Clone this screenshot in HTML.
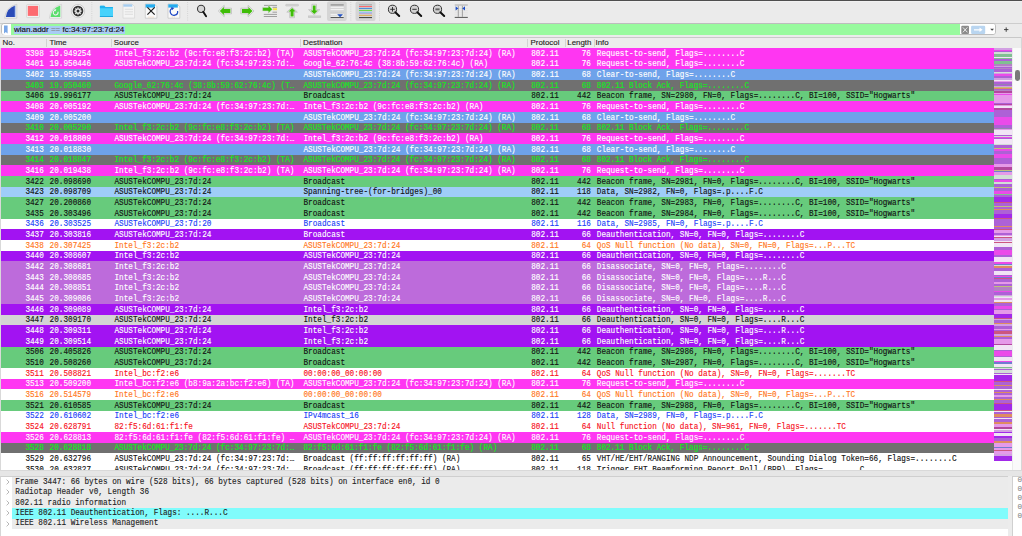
<!DOCTYPE html>
<html><head><meta charset="utf-8">
<style>
html,body{margin:0;padding:0;}
body{width:1022px;height:536px;overflow:hidden;position:relative;background:#ebebeb;font-family:"Liberation Sans",sans-serif;}
.abs{position:absolute;}
#tb{position:absolute;left:0;top:0;}
#filter{position:absolute;left:1px;top:23px;width:995px;height:12px;box-sizing:border-box;border:1px solid #bdbdbd;border-radius:3px;background:#fff;}
#fgreen{position:absolute;left:11px;top:24px;width:948.5px;height:11px;background:#98fa9e;}
#fsel{position:absolute;left:13.7px;top:25.5px;width:111.3px;height:8.3px;background:#a8ccf4;}
#ftext{position:absolute;left:14px;top:24px;height:11px;line-height:11px;font-size:8px;color:#111;white-space:pre;-webkit-text-stroke:0.15px #111;}
#hdr{position:absolute;left:0;top:36.5px;width:1022px;height:11.5px;background:#ececec;border-top:1px solid #c8c8c8;box-sizing:border-box;}
.hl{position:absolute;top:37px;height:11px;line-height:11px;font-size:7.9px;color:#222;white-space:pre;-webkit-text-stroke:0.12px #222;}
.hs{position:absolute;top:38.5px;width:1px;height:8.5px;background:#d2d2d2;}
#list{position:absolute;left:0;top:48px;width:1022px;height:422px;background:#fff;overflow:hidden;}
.r{position:absolute;left:1px;width:993px;height:10.667px;font-family:"Liberation Mono",monospace;font-size:7.7px;line-height:10.667px;white-space:pre;}
.r span{position:absolute;top:0.5px;margin-left:0.4px;transform:scaleY(1.1);transform-origin:0 7px;-webkit-text-stroke:0.12px currentColor;}
.no{left:24px;}
.tm{left:48.2px;}
.src{left:113.1px;}
.dst{left:302.1px;}
.pr{left:529.8px;}
.ln{left:560px;width:29.5px;text-align:right;}
.inf{left:595.4px;}
#det{position:absolute;left:0;top:475.5px;width:1008px;height:60.5px;background:#fff;border-top:1px solid #cfcfcf;border-left:1px solid #d6d6d6;box-sizing:border-box;}
.dr{position:absolute;left:11.2px;width:996px;height:10.4px;background:#ebebeb;font-family:"Liberation Mono",monospace;font-size:7.7px;line-height:10.4px;white-space:pre;color:#1e1e1e;}
.dr span{position:absolute;left:3.1px;top:-0.3px;transform:scaleY(1.1);transform-origin:0 7px;-webkit-text-stroke:0.12px currentColor;}
.chev{position:absolute;left:5px;}
</style></head><body>
<!-- toolbar -->
<div class="abs" style="left:0;top:0;width:1022px;height:1px;background:#4e4e4e"></div>
<div class="abs" style="left:0;top:1px;width:1022px;height:1px;background:#f1f1f1"></div>
<div class="abs" style="left:0;top:22.5px;width:1022px;height:1px;background:#cdcdcd"></div>
<svg id="tb" width="1022" height="23" viewBox="0 0 1022 23">
<!-- start fin -->
<path d="M4.6 18.2 Q5.8 7 16.8 4.2 V18.2 Z" fill="#f3f3f3" stroke="#c6c6c6" stroke-width="0.7"/>
<path d="M5.9 16.9 Q7 8.2 15.2 5.6 V16.9 Z" fill="#2a4bb8"/>
<path d="M15.2 5.8 V16.9" stroke="#a8c4f0" stroke-width="0.8"/>
<!-- stop -->
<rect x="26.6" y="4.6" width="12.8" height="13" rx="0.8" fill="#f2f2f2" stroke="#cdcdcd" stroke-width="0.7"/>
<rect x="27.8" y="5.9" width="10.3" height="10" fill="#fd6a70"/>
<!-- restart fin -->
<path d="M49.3 18.2 Q50.5 7 61.6 4.2 V18.2 Z" fill="#f4f4f4" stroke="#cfcfcf" stroke-width="0.7"/>
<path d="M50.5 17 Q51.6 8.2 60.3 5.5 V17 Z" fill="#5ade6c"/>
<path d="M57.9 11.7 A2.4 2.4 0 1 1 55 10.3" fill="none" stroke="#f4eef4" stroke-width="1.1"/>
<path d="M54.2 9.2 L56.4 9.3 L55.4 11.4 Z" fill="#f4eef4"/>
<!-- options gear -->
<circle cx="78" cy="11.1" r="6.7" fill="#f4f4f4" stroke="#a8a8a8" stroke-width="0.45"/>
<circle cx="78" cy="11.1" r="5.3" fill="#363636"/>
<g fill="#f2f2f2">
<circle cx="78" cy="11.1" r="2.7"/>
<rect x="77.4" y="7.4" width="1.2" height="7.4"/>
<rect x="74.3" y="10.5" width="7.4" height="1.2"/>
<rect x="77.4" y="7.4" width="1.2" height="7.4" transform="rotate(45 78 11.1)"/>
<rect x="77.4" y="7.4" width="1.2" height="7.4" transform="rotate(-45 78 11.1)"/>
</g>
<circle cx="78" cy="11.1" r="1.5" fill="#2a2a2a"/>
<!-- sep -->
<path d="M91.8 2 V20.5" stroke="#c4c4c4" stroke-width="0.6" stroke-dasharray="1 1.2"/>
<!-- folder -->
<path d="M99.9 16.4 V6.3 Q99.9 5.7 100.5 5.7 H104.3 L105.4 6.9 H112.4 Q113 6.9 113 7.5 V16.4 Q113 16.9 112.4 16.9 H100.5 Q99.9 16.9 99.9 16.4 Z" fill="#48d2fc"/>
<path d="M99.9 8.2 V6.3 Q99.9 5.7 100.5 5.7 H104.3 L105.4 6.9 H112.4 Q113 6.9 113 7.5 V8.2 Z" fill="#1eb3ee"/>
<rect x="99.9" y="16" width="13.1" height="0.9" fill="#1aa3dd"/>
<!-- doc faded -->
<path d="M123 4 H132 L134.6 6.6 V18.1 H123 Z" fill="#f4f4f4" stroke="#d0d0d0" stroke-width="0.6"/>
<rect x="123.3" y="4.3" width="9" height="2.4" fill="#a6cdf0"/>
<path d="M124.8 9.3 H133 M124.8 11.8 H133 M124.8 14.3 H133" stroke="#d8d8d8" stroke-width="0.8"/>
<!-- doc close -->
<path d="M145.3 4 H154.3 L156.9 6.6 V18.2 H145.3 Z" fill="#fafafa" stroke="#b8b8b8" stroke-width="0.6"/>
<rect x="145.6" y="4.3" width="9.4" height="3.3" fill="#24abee"/>
<path d="M147.4 7.4 L154.7 14.7 M154.7 7.4 L147.4 14.7" stroke="#1e1e1e" stroke-width="1.2"/>
<path d="M148.6 17 H149.4 M150.6 17 H151.4 M152.6 17 H153.4" stroke="#f7c08a" stroke-width="0.8"/>
<!-- doc reload -->
<path d="M168 4 H177 L179.8 6.8 V18.2 H168 Z" fill="#fafafa" stroke="#b8b8b8" stroke-width="0.6"/>
<rect x="168.3" y="4.3" width="9.5" height="3.3" fill="#24abee"/>
<path d="M172.3 8.3 A3.7 3.7 0 1 0 177.6 11" fill="none" stroke="#1e47c4" stroke-width="1.2"/>
<path d="M171.2 6.9 L174.3 8 L172 10.2 Z" fill="#1e47c4"/>
<path d="M171.8 17 H172.6 M173.8 17 H174.6" stroke="#f7c08a" stroke-width="0.8"/>
<!-- sep -->
<path d="M187.6 2 V20.5" stroke="#c4c4c4" stroke-width="0.6" stroke-dasharray="1 1.2"/>
<!-- find -->
<circle cx="201.1" cy="8.9" r="3.6" fill="#d6d6d6" stroke="#3a3a3a" stroke-width="1.1"/>
<path d="M203.2 11.8 L206.1 16.3" stroke="#111" stroke-width="1.9" stroke-linecap="round"/>
<!-- back arrow -->
<path d="M218.3 11 L224.2 5.4 V8.2 H231.5 V13.8 H224.2 V16.6 Z" fill="#f2f2f2" stroke="#bcbcbc" stroke-width="0.8" stroke-linejoin="round"/>
<path d="M219.8 11 L223.9 6.9 V9.1 H230.4 V12.9 H223.9 V15.1 Z" fill="#3fbd08"/>
<!-- forward arrow -->
<path d="M254 11 L248.1 5.4 V8.2 H240.8 V13.8 H248.1 V16.6 Z" fill="#f2f2f2" stroke="#bcbcbc" stroke-width="0.8" stroke-linejoin="round"/>
<path d="M252.5 11 L248.4 6.9 V9.1 H241.9 V12.9 H248.4 V15.1 Z" fill="#3fbd08"/>
<!-- go to packet -->
<path d="M264 5.4 H277 M272.5 7.3 H277 M272.5 12.2 H277 M263.8 14.4 H277 M263.8 16.5 H277" stroke="#8c8c8c" stroke-width="0.8"/>
<rect x="273" y="8.2" width="4" height="2" fill="#f4e44a"/>
<path d="M272.4 9.2 L268.3 5.2 V7.4 H262.6 V11 H268.3 V13.2 Z" fill="#3fbd08" stroke="#d4d4d4" stroke-width="0.5"/>
<!-- first packet -->
<rect x="285.6" y="4.3" width="13" height="1.8" rx="0.9" fill="#d4d4d4" stroke="#bdbdbd" stroke-width="0.5"/>
<path d="M292.1 7 L297.4 12.1 H294.5 V17.7 H289.7 V12.1 H286.8 Z" fill="#f2f2f2" stroke="#bcbcbc" stroke-width="0.8" stroke-linejoin="round"/>
<path d="M292.1 8 L295.7 11.6 H293.6 V16.6 H290.6 V11.6 H288.5 Z" fill="#3fbd08"/>
<!-- last packet -->
<path d="M311.9 4.3 H316.5 V9.7 H319.8 L314.2 15 L308.6 9.7 H311.9 Z" fill="#f2f2f2" stroke="#bcbcbc" stroke-width="0.8" stroke-linejoin="round"/>
<path d="M312.8 5.5 H315.6 V10.4 H317.9 L314.2 14 L310.5 10.4 H312.8 Z" fill="#3fbd08"/>
<rect x="308.3" y="15.9" width="12.5" height="1.8" fill="#d0d0d0" stroke="#bdbdbd" stroke-width="0.5"/>
<!-- autoscroll (pressed) -->
<rect x="327" y="1.6" width="19.7" height="19.5" rx="2" fill="#d5d5d5"/>
<rect x="330.6" y="4.1" width="13.1" height="1.6" fill="#9f9f9f"/>
<rect x="330.6" y="6.8" width="13.1" height="1.1" fill="#f2f2f2"/>
<rect x="330.6" y="9" width="13.1" height="1.1" fill="#f2f2f2"/>
<path d="M330.6 12.3 H343.7" stroke="#bcbcbc" stroke-width="0.6" stroke-dasharray="1 1"/>
<rect x="330.6" y="14.2" width="13.1" height="1.1" fill="#f7f7f7"/>
<rect x="330.6" y="16.5" width="13.1" height="1" fill="#fff"/>
<rect x="330.6" y="17.2" width="13.1" height="0.8" fill="#333"/>
<path d="M337.2 14.2 H343 L340.1 17.3 Z" fill="#1f4fc2"/>
<!-- sep -->
<path d="M350.8 2 V20.5" stroke="#c4c4c4" stroke-width="0.6" stroke-dasharray="1 1.2"/>
<!-- colorize (pressed) -->
<rect x="355.5" y="1.6" width="20" height="19.5" rx="2" fill="#d5d5d5"/>
<rect x="359" y="4.1" width="13" height="1.4" fill="#aab0b2"/>
<rect x="359" y="6" width="13" height="1.1" fill="#fb6a6e"/>
<rect x="359" y="7.9" width="13" height="1.1" fill="#4d8fd8"/>
<rect x="359" y="9.9" width="13" height="1.1" fill="#6ed84a"/>
<rect x="359" y="11.8" width="13" height="1.1" fill="#8ec2ef"/>
<rect x="359" y="13.1" width="13" height="0.7" fill="#b794d8"/>
<rect x="359" y="14.8" width="13" height="1.1" fill="#dcac5a"/>
<rect x="359" y="17" width="13" height="1.1" fill="#4a4a4a"/>
<!-- sep -->
<path d="M379.5 2 V20.5" stroke="#c4c4c4" stroke-width="0.6" stroke-dasharray="1 1.2"/>
<!-- zoom in -->
<circle cx="392.5" cy="9.3" r="4.1" fill="#d2d2d2" stroke="#333" stroke-width="1"/>
<path d="M390.2 9.3 H394.8 M392.5 7 V11.6" stroke="#222" stroke-width="0.9"/>
<path d="M395.3 12.2 L399.2 16" stroke="#111" stroke-width="2" stroke-linecap="round"/>
<!-- zoom out -->
<circle cx="414.5" cy="9.3" r="4.1" fill="#d2d2d2" stroke="#333" stroke-width="1"/>
<path d="M412.3 9.3 H416.7" stroke="#222" stroke-width="0.9"/>
<path d="M417.3 12.2 L421.2 16" stroke="#111" stroke-width="2" stroke-linecap="round"/>
<!-- zoom 100 -->
<circle cx="437.5" cy="9.3" r="4.1" fill="#d2d2d2" stroke="#333" stroke-width="1"/>
<rect x="435.4" y="8.4" width="4.2" height="1.9" fill="#666"/>
<path d="M440.3 12.2 L444.2 16" stroke="#111" stroke-width="2" stroke-linecap="round"/>
<!-- resize columns -->
<rect x="454.7" y="4.2" width="13.1" height="1.6" fill="#c4c4c4"/>
<path d="M454.7 8.5 H467.8 M454.7 10.7 H467.8 M454.7 12.8 H467.8 M454.7 14.9 H467.8" stroke="#dadada" stroke-width="0.5"/>
<path d="M458.3 5.8 V16.8 M462.4 5.8 V16.8" stroke="#999" stroke-width="0.9"/>
<rect x="454.7" y="16.9" width="13.1" height="0.9" fill="#444"/>
<path d="M455.6 6.2 L458.3 8.4 L455.6 10.6 Z M465 6.2 L462.3 8.4 L465 10.6 Z" fill="#1d4fc8"/>

</svg>
<!-- filter bar -->
<div id="filter"></div>
<div id="fgreen"></div>
<div class="abs" style="left:1.5px;top:24px;width:9.5px;height:11px;background:#fff;border-radius:3px 0 0 3px"></div>
<svg class="abs" style="left:0;top:23px" width="14" height="13"><path d="M4 2.6 H7.6 V10.4 L5.8 9 L4 10.4 Z" fill="#79a7e6"/></svg>
<div id="fsel"></div>
<div id="ftext">wlan.addr <span style="color:#7a7a7a;-webkit-text-stroke:0.15px #7a7a7a">==</span> fc:34:97:23:7d:24</div>
<div class="abs" style="left:959.5px;top:24px;width:35.5px;height:10px;background:#fff;border-radius:0 2px 2px 0"></div>
<svg class="abs" style="left:955px;top:22px" width="67" height="14" viewBox="955 22 67 14">
<rect x="961.3" y="25.8" width="7.7" height="8.1" rx="1" fill="#8b8b8b"/>
<path d="M962.9 27.4 L967.4 32.3 M967.4 27.4 L962.9 32.3" stroke="#fff" stroke-width="0.8"/>
<rect x="971.1" y="25.8" width="14.1" height="8.1" rx="1.2" fill="#b9d5f0"/>
<path d="M974 29.2 H979.5 V27.6 L982.6 29.85 L979.5 32.1 V30.5 H974 Z" fill="#fff"/>
<path d="M990.2 28.8 H994 L992.1 30.8 Z" fill="#444"/>
<path d="M1004 29.6 H1008.4 M1006.2 27.4 V31.8" stroke="#333" stroke-width="0.9"/>
</svg>
<!-- header -->
<div id="hdr"></div>
<div class="hl" style="left:2.6px">No.</div>
<div class="hl" style="left:49.5px">Time</div>
<div class="hl" style="left:113.8px">Source</div>
<div class="hl" style="left:303px">Destination</div>
<div class="hl" style="left:530.5px">Protocol</div>
<div class="hl" style="left:567.3px;width:25.3px;overflow:hidden">Length</div>
<div class="hl" style="left:595.5px">Info</div>
<div class="hs" style="left:46.3px"></div>
<div class="hs" style="left:110.5px"></div>
<div class="hs" style="left:299.7px"></div>
<div class="hs" style="left:527.1px"></div>
<div class="hs" style="left:565.4px"></div>
<div class="hs" style="left:593.6px"></div>
<div class="abs" style="left:1020.5px;top:37px;width:1px;height:11px;background:#d0d0d0"></div>
<!-- packet list -->
<div id="list">
<div class="abs" style="left:0;top:0;width:1px;height:422px;background:#d9d9d9"></div>
</div>
<div class="abs" style="left:0;top:48px;width:1022px;height:422px;overflow:hidden">
<div class="r" style="top:0.000px;background:#ff36f2;color:#ffffff"><span class="no">3398</span><span class="tm">19.949254</span><span class="src">Intel_f3:2c:b2 (9c:fc:e8:f3:2c:b2) (TA)</span><span class="dst">ASUSTekCOMPU_23:7d:24 (fc:34:97:23:7d:24) (RA)</span><span class="pr">802.11</span><span class="ln">76</span><span class="inf">Request-to-send, Flags=........C</span></div>
<div class="r" style="top:10.667px;background:#ff36f2;color:#ffffff"><span class="no">3401</span><span class="tm">19.950446</span><span class="src">ASUSTekCOMPU_23:7d:24 (fc:34:97:23:7d:…</span><span class="dst">Google_62:76:4c (38:8b:59:62:76:4c) (RA)</span><span class="pr">802.11</span><span class="ln">76</span><span class="inf">Request-to-send, Flags=........C</span></div>
<div class="r" style="top:21.333px;background:#6ea2ea;color:#ffffff"><span class="no">3402</span><span class="tm">19.950455</span><span class="src"></span><span class="dst">ASUSTekCOMPU_23:7d:24 (fc:34:97:23:7d:24) (RA)</span><span class="pr">802.11</span><span class="ln">68</span><span class="inf">Clear-to-send, Flags=........C</span></div>
<div class="r" style="top:32.000px;background:#707070;color:#12ea1e"><span class="no">3403</span><span class="tm">19.950460</span><span class="src">Google_62:76:4c (38:8b:59:62:76:4c) (T…</span><span class="dst">ASUSTekCOMPU_23:7d:24 (fc:34:97:23:7d:24) (RA)</span><span class="pr">802.11</span><span class="ln">68</span><span class="inf">802.11 Block Ack, Flags=........C</span></div>
<div class="r" style="top:42.667px;background:#67cb7c;color:#111111"><span class="no">3406</span><span class="tm">19.996177</span><span class="src">ASUSTekCOMPU_23:7d:24</span><span class="dst">Broadcast</span><span class="pr">802.11</span><span class="ln">442</span><span class="inf">Beacon frame, SN=2980, FN=0, Flags=........C, BI=100, SSID="Hogwarts"</span></div>
<div class="r" style="top:53.333px;background:#ff36f2;color:#ffffff"><span class="no">3408</span><span class="tm">20.005192</span><span class="src">ASUSTekCOMPU_23:7d:24 (fc:34:97:23:7d:…</span><span class="dst">Intel_f3:2c:b2 (9c:fc:e8:f3:2c:b2) (RA)</span><span class="pr">802.11</span><span class="ln">76</span><span class="inf">Request-to-send, Flags=........C</span></div>
<div class="r" style="top:64.000px;background:#6ea2ea;color:#ffffff"><span class="no">3409</span><span class="tm">20.005200</span><span class="src"></span><span class="dst">ASUSTekCOMPU_23:7d:24 (fc:34:97:23:7d:24) (RA)</span><span class="pr">802.11</span><span class="ln">68</span><span class="inf">Clear-to-send, Flags=........C</span></div>
<div class="r" style="top:74.667px;background:#707070;color:#12ea1e"><span class="no">3410</span><span class="tm">20.005290</span><span class="src">Intel_f3:2c:b2 (9c:fc:e8:f3:2c:b2) (TA)</span><span class="dst">ASUSTekCOMPU_23:7d:24 (fc:34:97:23:7d:24) (RA)</span><span class="pr">802.11</span><span class="ln">68</span><span class="inf">802.11 Block Ack, Flags=........C</span></div>
<div class="r" style="top:85.333px;background:#ff36f2;color:#ffffff"><span class="no">3412</span><span class="tm">20.018809</span><span class="src">ASUSTekCOMPU_23:7d:24 (fc:34:97:23:7d:…</span><span class="dst">Intel_f3:2c:b2 (9c:fc:e8:f3:2c:b2) (RA)</span><span class="pr">802.11</span><span class="ln">76</span><span class="inf">Request-to-send, Flags=........C</span></div>
<div class="r" style="top:96.000px;background:#6ea2ea;color:#ffffff"><span class="no">3413</span><span class="tm">20.018830</span><span class="src"></span><span class="dst">ASUSTekCOMPU_23:7d:24 (fc:34:97:23:7d:24) (RA)</span><span class="pr">802.11</span><span class="ln">68</span><span class="inf">Clear-to-send, Flags=........C</span></div>
<div class="r" style="top:106.667px;background:#707070;color:#12ea1e"><span class="no">3414</span><span class="tm">20.018847</span><span class="src">Intel_f3:2c:b2 (9c:fc:e8:f3:2c:b2) (TA)</span><span class="dst">ASUSTekCOMPU_23:7d:24 (fc:34:97:23:7d:24) (RA)</span><span class="pr">802.11</span><span class="ln">68</span><span class="inf">802.11 Block Ack, Flags=........C</span></div>
<div class="r" style="top:117.333px;background:#ff36f2;color:#ffffff"><span class="no">3416</span><span class="tm">20.019438</span><span class="src">Intel_f3:2c:b2 (9c:fc:e8:f3:2c:b2) (TA)</span><span class="dst">ASUSTekCOMPU_23:7d:24 (fc:34:97:23:7d:24) (RA)</span><span class="pr">802.11</span><span class="ln">76</span><span class="inf">Request-to-send, Flags=........C</span></div>
<div class="r" style="top:128.000px;background:#67cb7c;color:#111111"><span class="no">3422</span><span class="tm">20.098690</span><span class="src">ASUSTekCOMPU_23:7d:24</span><span class="dst">Broadcast</span><span class="pr">802.11</span><span class="ln">442</span><span class="inf">Beacon frame, SN=2981, FN=0, Flags=........C, BI=100, SSID="Hogwarts"</span></div>
<div class="r" style="top:138.667px;background:#9fcdf8;color:#111111"><span class="no">3423</span><span class="tm">20.098709</span><span class="src">ASUSTekCOMPU_23:7d:24</span><span class="dst">Spanning-tree-(for-bridges)_00</span><span class="pr">802.11</span><span class="ln">118</span><span class="inf">Data, SN=2982, FN=0, Flags=.p....F.C</span></div>
<div class="r" style="top:149.333px;background:#67cb7c;color:#111111"><span class="no">3427</span><span class="tm">20.200860</span><span class="src">ASUSTekCOMPU_23:7d:24</span><span class="dst">Broadcast</span><span class="pr">802.11</span><span class="ln">442</span><span class="inf">Beacon frame, SN=2983, FN=0, Flags=........C, BI=100, SSID="Hogwarts"</span></div>
<div class="r" style="top:160.000px;background:#67cb7c;color:#111111"><span class="no">3435</span><span class="tm">20.303496</span><span class="src">ASUSTekCOMPU_23:7d:24</span><span class="dst">Broadcast</span><span class="pr">802.11</span><span class="ln">442</span><span class="inf">Beacon frame, SN=2984, FN=0, Flags=........C, BI=100, SSID="Hogwarts"</span></div>
<div class="r" style="top:170.667px;background:#ffffff;color:#1a3ff7"><span class="no">3436</span><span class="tm">20.303525</span><span class="src">ASUSTekCOMPU_23:7d:20</span><span class="dst">Broadcast</span><span class="pr">802.11</span><span class="ln">116</span><span class="inf">Data, SN=2985, FN=0, Flags=.p....F.C</span></div>
<div class="r" style="top:181.333px;background:#a213f2;color:#ffffff"><span class="no">3437</span><span class="tm">20.303816</span><span class="src">ASUSTekCOMPU_23:7d:24</span><span class="dst">Broadcast</span><span class="pr">802.11</span><span class="ln">66</span><span class="inf">Deauthentication, SN=0, FN=0, Flags=........C</span></div>
<div class="r" style="top:192.000px;background:#ffffff;color:#ff761a"><span class="no">3438</span><span class="tm">20.307425</span><span class="src">Intel_f3:2c:b2</span><span class="dst">ASUSTekCOMPU_23:7d:24</span><span class="pr">802.11</span><span class="ln">64</span><span class="inf">QoS Null function (No data), SN=0, FN=0, Flags=...P...TC</span></div>
<div class="r" style="top:202.667px;background:#a213f2;color:#ffffff"><span class="no">3440</span><span class="tm">20.308607</span><span class="src">Intel_f3:2c:b2</span><span class="dst">ASUSTekCOMPU_23:7d:24</span><span class="pr">802.11</span><span class="ln">66</span><span class="inf">Deauthentication, SN=0, FN=0, Flags=........C</span></div>
<div class="r" style="top:213.333px;background:#bd6bdb;color:#ffffff"><span class="no">3442</span><span class="tm">20.308681</span><span class="src">Intel_f3:2c:b2</span><span class="dst">ASUSTekCOMPU_23:7d:24</span><span class="pr">802.11</span><span class="ln">66</span><span class="inf">Disassociate, SN=0, FN=0, Flags=........C</span></div>
<div class="r" style="top:224.000px;background:#bd6bdb;color:#ffffff"><span class="no">3443</span><span class="tm">20.308685</span><span class="src">Intel_f3:2c:b2</span><span class="dst">ASUSTekCOMPU_23:7d:24</span><span class="pr">802.11</span><span class="ln">66</span><span class="inf">Disassociate, SN=0, FN=0, Flags=....R...C</span></div>
<div class="r" style="top:234.667px;background:#bd6bdb;color:#ffffff"><span class="no">3444</span><span class="tm">20.308851</span><span class="src">Intel_f3:2c:b2</span><span class="dst">ASUSTekCOMPU_23:7d:24</span><span class="pr">802.11</span><span class="ln">66</span><span class="inf">Disassociate, SN=0, FN=0, Flags=....R...C</span></div>
<div class="r" style="top:245.333px;background:#bd6bdb;color:#ffffff"><span class="no">3445</span><span class="tm">20.309086</span><span class="src">Intel_f3:2c:b2</span><span class="dst">ASUSTekCOMPU_23:7d:24</span><span class="pr">802.11</span><span class="ln">66</span><span class="inf">Disassociate, SN=0, FN=0, Flags=....R...C</span></div>
<div class="r" style="top:256.000px;background:#a213f2;color:#ffffff"><span class="no">3446</span><span class="tm">20.309089</span><span class="src">ASUSTekCOMPU_23:7d:24</span><span class="dst">Intel_f3:2c:b2</span><span class="pr">802.11</span><span class="ln">66</span><span class="inf">Deauthentication, SN=0, FN=0, Flags=........C</span></div>
<div class="r" style="top:266.667px;background:#d4d4d4;color:#111111"><span class="no">3447</span><span class="tm">20.309170</span><span class="src">ASUSTekCOMPU_23:7d:24</span><span class="dst">Intel_f3:2c:b2</span><span class="pr">802.11</span><span class="ln">66</span><span class="inf">Deauthentication, SN=0, FN=0, Flags=....R...C</span></div>
<div class="r" style="top:277.333px;background:#a213f2;color:#ffffff"><span class="no">3448</span><span class="tm">20.309311</span><span class="src">ASUSTekCOMPU_23:7d:24</span><span class="dst">Intel_f3:2c:b2</span><span class="pr">802.11</span><span class="ln">66</span><span class="inf">Deauthentication, SN=0, FN=0, Flags=....R...C</span></div>
<div class="r" style="top:288.000px;background:#a213f2;color:#ffffff"><span class="no">3449</span><span class="tm">20.309514</span><span class="src">ASUSTekCOMPU_23:7d:24</span><span class="dst">Intel_f3:2c:b2</span><span class="pr">802.11</span><span class="ln">66</span><span class="inf">Deauthentication, SN=0, FN=0, Flags=....R...C</span></div>
<div class="r" style="top:298.667px;background:#67cb7c;color:#111111"><span class="no">3506</span><span class="tm">20.405826</span><span class="src">ASUSTekCOMPU_23:7d:24</span><span class="dst">Broadcast</span><span class="pr">802.11</span><span class="ln">442</span><span class="inf">Beacon frame, SN=2986, FN=0, Flags=........C, BI=100, SSID="Hogwarts"</span></div>
<div class="r" style="top:309.333px;background:#67cb7c;color:#111111"><span class="no">3510</span><span class="tm">20.508260</span><span class="src">ASUSTekCOMPU_23:7d:24</span><span class="dst">Broadcast</span><span class="pr">802.11</span><span class="ln">442</span><span class="inf">Beacon frame, SN=2987, FN=0, Flags=........C, BI=100, SSID="Hogwarts"</span></div>
<div class="r" style="top:320.000px;background:#ffffff;color:#f7101c"><span class="no">3511</span><span class="tm">20.508821</span><span class="src">Intel_bc:f2:e6</span><span class="dst">00:00:00_00:00:00</span><span class="pr">802.11</span><span class="ln">64</span><span class="inf">QoS Null function (No data), SN=0, FN=0, Flags=.......TC</span></div>
<div class="r" style="top:330.667px;background:#ff36f2;color:#ffffff"><span class="no">3513</span><span class="tm">20.509200</span><span class="src">Intel_bc:f2:e6 (b8:9a:2a:bc:f2:e6) (TA)</span><span class="dst">ASUSTekCOMPU_23:7d:24 (fc:34:97:23:7d:24) (RA)</span><span class="pr">802.11</span><span class="ln">76</span><span class="inf">Request-to-send, Flags=........C</span></div>
<div class="r" style="top:341.333px;background:#ffffff;color:#ff761a"><span class="no">3516</span><span class="tm">20.514579</span><span class="src">Intel_bc:f2:e6</span><span class="dst">00:00:00_00:00:00</span><span class="pr">802.11</span><span class="ln">64</span><span class="inf">QoS Null function (No data), SN=0, FN=0, Flags=...P...TC</span></div>
<div class="r" style="top:352.000px;background:#67cb7c;color:#111111"><span class="no">3521</span><span class="tm">20.610585</span><span class="src">ASUSTekCOMPU_23:7d:24</span><span class="dst">Broadcast</span><span class="pr">802.11</span><span class="ln">442</span><span class="inf">Beacon frame, SN=2988, FN=0, Flags=........C, BI=100, SSID="Hogwarts"</span></div>
<div class="r" style="top:362.667px;background:#ffffff;color:#1a3ff7"><span class="no">3522</span><span class="tm">20.610602</span><span class="src">Intel_bc:f2:e6</span><span class="dst">IPv4mcast_16</span><span class="pr">802.11</span><span class="ln">128</span><span class="inf">Data, SN=2989, FN=0, Flags=.p....F.C</span></div>
<div class="r" style="top:373.333px;background:#ffffff;color:#f7101c"><span class="no">3524</span><span class="tm">20.628791</span><span class="src">82:f5:6d:61:f1:fe</span><span class="dst">ASUSTekCOMPU_23:7d:24</span><span class="pr">802.11</span><span class="ln">64</span><span class="inf">Null function (No data), SN=961, FN=0, Flags=.......TC</span></div>
<div class="r" style="top:384.000px;background:#ff36f2;color:#ffffff"><span class="no">3526</span><span class="tm">20.628813</span><span class="src">82:f5:6d:61:f1:fe (82:f5:6d:61:f1:fe) …</span><span class="dst">ASUSTekCOMPU_23:7d:24 (fc:34:97:23:7d:24) (RA)</span><span class="pr">802.11</span><span class="ln">76</span><span class="inf">Request-to-send, Flags=........C</span></div>
<div class="r" style="top:394.667px;background:#707070;color:#12ea1e"><span class="no">3528</span><span class="tm">20.628818</span><span class="src">ASUSTekCOMPU_23:7d:24 (fc:34:97:23:7d:…</span><span class="dst">82:f5:6d:61:f1:fe (82:f5:6d:61:f1:fe) (RA)</span><span class="pr">802.11</span><span class="ln">68</span><span class="inf">802.11 Block Ack, Flags=........C</span></div>
<div class="r" style="top:405.333px;background:#ffffff;color:#111111"><span class="no">3529</span><span class="tm">20.632796</span><span class="src">ASUSTekCOMPU_23:7d:24 (fc:34:97:23:7d:…</span><span class="dst">Broadcast (ff:ff:ff:ff:ff:ff) (RA)</span><span class="pr">802.11</span><span class="ln">65</span><span class="inf">VHT/HE/EHT/RANGING NDP Announcement, Sounding Dialog Token=66, Flags=........C</span></div>
<div class="r" style="top:416.000px;background:#ffffff;color:#111111"><span class="no">3530</span><span class="tm">20.632827</span><span class="src">ASUSTekCOMPU_23:7d:24 (fc:34:97:23:7d:…</span><span class="dst">Broadcast (ff:ff:ff:ff:ff:ff) (RA)</span><span class="pr">802.11</span><span class="ln">118</span><span class="inf">Trigger EHT Beamforming Report Poll (BRP), Flags=........C</span></div>
</div>
<div class="abs" style="left:994px;top:48px;width:18px;height:413px;overflow:hidden">
<div class="abs" style="left:0;top:0px;width:18px;height:2px;background:#d8a8e8"></div>
<div class="abs" style="left:0;top:2px;width:18px;height:1px;background:#f83cf0"></div>
<div class="abs" style="left:0;top:3px;width:18px;height:1px;background:#a858d8"></div>
<div class="abs" style="left:0;top:4px;width:18px;height:2px;background:#d8f8d8"></div>
<div class="abs" style="left:0;top:6px;width:18px;height:3px;background:#70d080"></div>
<div class="abs" style="left:0;top:9px;width:18px;height:1px;background:#ffffff"></div>
<div class="abs" style="left:0;top:10px;width:18px;height:1px;background:#70d080"></div>
<div class="abs" style="left:0;top:11px;width:18px;height:2px;background:#a858d8"></div>
<div class="abs" style="left:0;top:13px;width:18px;height:3px;background:#70d080"></div>
<div class="abs" style="left:0;top:16px;width:18px;height:2px;background:#b080c0"></div>
<div class="abs" style="left:0;top:18px;width:18px;height:1px;background:#d8a8e8"></div>
<div class="abs" style="left:0;top:19px;width:18px;height:1px;background:#a858d8"></div>
<div class="abs" style="left:0;top:20px;width:18px;height:1px;background:#b080c0"></div>
<div class="abs" style="left:0;top:21px;width:18px;height:3px;background:#a858d8"></div>
<div class="abs" style="left:0;top:24px;width:18px;height:1px;background:#d8f8d8"></div>
<div class="abs" style="left:0;top:25px;width:18px;height:1px;background:#d8a8e8"></div>
<div class="abs" style="left:0;top:26px;width:18px;height:2px;background:#f83cf0"></div>
<div class="abs" style="left:0;top:28px;width:18px;height:2px;background:#a858d8"></div>
<div class="abs" style="left:0;top:30px;width:18px;height:2px;background:#d8a8e8"></div>
<div class="abs" style="left:0;top:32px;width:18px;height:1px;background:#ffffff"></div>
<div class="abs" style="left:0;top:33px;width:18px;height:1px;background:#f0a0f0"></div>
<div class="abs" style="left:0;top:34px;width:18px;height:2px;background:#a858d8"></div>
<div class="abs" style="left:0;top:36px;width:18px;height:1px;background:#8a80a8"></div>
<div class="abs" style="left:0;top:37px;width:18px;height:1px;background:#a858d8"></div>
<div class="abs" style="left:0;top:38px;width:18px;height:1px;background:#d8a8e8"></div>
<div class="abs" style="left:0;top:39px;width:18px;height:1px;background:#c0d060"></div>
<div class="abs" style="left:0;top:40px;width:18px;height:1px;background:#e89040"></div>
<div class="abs" style="left:0;top:41px;width:18px;height:1px;background:#a858d8"></div>
<div class="abs" style="left:0;top:42px;width:18px;height:1px;background:#b080c0"></div>
<div class="abs" style="left:0;top:43px;width:18px;height:2px;background:#b03890"></div>
<div class="abs" style="left:0;top:45px;width:18px;height:1px;background:#f0a0f0"></div>
<div class="abs" style="left:0;top:46px;width:18px;height:1px;background:#f83cf0"></div>
<div class="abs" style="left:0;top:47px;width:18px;height:8px;background:#f0a0f0"></div>
<div class="abs" style="left:0;top:55px;width:18px;height:1px;background:#a858d8"></div>
<div class="abs" style="left:0;top:56px;width:18px;height:1px;background:#b03890"></div>
<div class="abs" style="left:0;top:57px;width:18px;height:1px;background:#f0a0f0"></div>
<div class="abs" style="left:0;top:58px;width:18px;height:2px;background:#ffffff"></div>
<div class="abs" style="left:0;top:60px;width:18px;height:2px;background:#b03890"></div>
<div class="abs" style="left:0;top:62px;width:18px;height:7px;background:#a858d8"></div>
<div class="abs" style="left:0;top:69px;width:18px;height:8px;background:#f83cf0"></div>
<div class="abs" style="left:0;top:77px;width:18px;height:3px;background:#a858d8"></div>
<div class="abs" style="left:0;top:80px;width:18px;height:1px;background:#8a80a8"></div>
<div class="abs" style="left:0;top:81px;width:18px;height:1px;background:#f0a0f0"></div>
<div class="abs" style="left:0;top:82px;width:18px;height:5px;background:#ffffff"></div>
<div class="abs" style="left:0;top:87px;width:18px;height:1px;background:#a858d8"></div>
<div class="abs" style="left:0;top:88px;width:18px;height:1px;background:#d8f8d8"></div>
<div class="abs" style="left:0;top:89px;width:18px;height:1px;background:#f83cf0"></div>
<div class="abs" style="left:0;top:90px;width:18px;height:1px;background:#a858d8"></div>
<div class="abs" style="left:0;top:91px;width:18px;height:5px;background:#ffffff"></div>
<div class="abs" style="left:0;top:96px;width:18px;height:1px;background:#d8f8d8"></div>
<div class="abs" style="left:0;top:97px;width:18px;height:3px;background:#a858d8"></div>
<div class="abs" style="left:0;top:100px;width:18px;height:1px;background:#c0d060"></div>
<div class="abs" style="left:0;top:101px;width:18px;height:2px;background:#f83cf0"></div>
<div class="abs" style="left:0;top:103px;width:18px;height:3px;background:#a858d8"></div>
<div class="abs" style="left:0;top:106px;width:18px;height:4px;background:#f83cf0"></div>
<div class="abs" style="left:0;top:110px;width:18px;height:6px;background:#a858d8"></div>
<div class="abs" style="left:0;top:116px;width:18px;height:3px;background:#f0a0f0"></div>
<div class="abs" style="left:0;top:119px;width:18px;height:3px;background:#b03890"></div>
<div class="abs" style="left:0;top:122px;width:18px;height:1px;background:#c0d060"></div>
<div class="abs" style="left:0;top:123px;width:18px;height:1px;background:#5a7ad0"></div>
<div class="abs" style="left:0;top:124px;width:18px;height:3px;background:#f0a0f0"></div>
<div class="abs" style="left:0;top:127px;width:18px;height:4px;background:#d8f8d8"></div>
<div class="abs" style="left:0;top:131px;width:18px;height:1px;background:#a858d8"></div>
<div class="abs" style="left:0;top:132px;width:18px;height:2px;background:#f83cf0"></div>
<div class="abs" style="left:0;top:134px;width:18px;height:2px;background:#d8f8d8"></div>
<div class="abs" style="left:0;top:136px;width:18px;height:3px;background:#a858d8"></div>
<div class="abs" style="left:0;top:139px;width:18px;height:1px;background:#c0d060"></div>
<div class="abs" style="left:0;top:140px;width:18px;height:3px;background:#a858d8"></div>
<div class="abs" style="left:0;top:143px;width:18px;height:3px;background:#f83cf0"></div>
<div class="abs" style="left:0;top:146px;width:18px;height:1px;background:#70d080"></div>
<div class="abs" style="left:0;top:147px;width:18px;height:2px;background:#a858d8"></div>
<div class="abs" style="left:0;top:149px;width:18px;height:5px;background:#9a10f0"></div>
<div class="abs" style="left:0;top:154px;width:18px;height:1px;background:#d04a6a"></div>
<div class="abs" style="left:0;top:155px;width:18px;height:3px;background:#a858d8"></div>
<div class="abs" style="left:0;top:158px;width:18px;height:1px;background:#c0d060"></div>
<div class="abs" style="left:0;top:159px;width:18px;height:2px;background:#a858d8"></div>
<div class="abs" style="left:0;top:161px;width:18px;height:1px;background:#e89040"></div>
<div class="abs" style="left:0;top:162px;width:18px;height:4px;background:#a858d8"></div>
<div class="abs" style="left:0;top:166px;width:18px;height:4px;background:#9a10f0"></div>
<div class="abs" style="left:0;top:170px;width:18px;height:1px;background:#d04a6a"></div>
<div class="abs" style="left:0;top:171px;width:18px;height:7px;background:#a858d8"></div>
<div class="abs" style="left:0;top:178px;width:18px;height:1px;background:#e89040"></div>
<div class="abs" style="left:0;top:179px;width:18px;height:2px;background:#a858d8"></div>
<div class="abs" style="left:0;top:181px;width:18px;height:1px;background:#d04a6a"></div>
<div class="abs" style="left:0;top:182px;width:18px;height:3px;background:#f0a0f0"></div>
<div class="abs" style="left:0;top:185px;width:18px;height:2px;background:#a858d8"></div>
<div class="abs" style="left:0;top:187px;width:18px;height:1px;background:#f0a0f0"></div>
<div class="abs" style="left:0;top:188px;width:18px;height:1px;background:#ffffff"></div>
<div class="abs" style="left:0;top:189px;width:18px;height:1px;background:#d04a6a"></div>
<div class="abs" style="left:0;top:190px;width:18px;height:3px;background:#d8a8e8"></div>
<div class="abs" style="left:0;top:193px;width:18px;height:1px;background:#ffffff"></div>
<div class="abs" style="left:0;top:194px;width:18px;height:1px;background:#d04a6a"></div>
<div class="abs" style="left:0;top:195px;width:18px;height:4px;background:#ffffff"></div>
<div class="abs" style="left:0;top:199px;width:18px;height:3px;background:#a858d8"></div>
<div class="abs" style="left:0;top:202px;width:18px;height:5px;background:#f83cf0"></div>
<div class="abs" style="left:0;top:207px;width:18px;height:2px;background:#a858d8"></div>
<div class="abs" style="left:0;top:209px;width:18px;height:5px;background:#ffffff"></div>
<div class="abs" style="left:0;top:214px;width:18px;height:2px;background:#f83cf0"></div>
<div class="abs" style="left:0;top:216px;width:18px;height:1px;background:#5a7ad0"></div>
<div class="abs" style="left:0;top:217px;width:18px;height:1px;background:#d8f8d8"></div>
<div class="abs" style="left:0;top:218px;width:18px;height:2px;background:#e89040"></div>
<div class="abs" style="left:0;top:220px;width:18px;height:3px;background:#a858d8"></div>
<div class="abs" style="left:0;top:223px;width:18px;height:4px;background:#ffffff"></div>
<div class="abs" style="left:0;top:227px;width:18px;height:1px;background:#a858d8"></div>
<div class="abs" style="left:0;top:228px;width:18px;height:1px;background:#f83cf0"></div>
<div class="abs" style="left:0;top:229px;width:18px;height:1px;background:#5a7ad0"></div>
<div class="abs" style="left:0;top:230px;width:18px;height:1px;background:#d04a6a"></div>
<div class="abs" style="left:0;top:231px;width:18px;height:3px;background:#a858d8"></div>
<div class="abs" style="left:0;top:234px;width:18px;height:2px;background:#f0a0f0"></div>
<div class="abs" style="left:0;top:236px;width:18px;height:2px;background:#a858d8"></div>
<div class="abs" style="left:0;top:238px;width:18px;height:1px;background:#c0d060"></div>
<div class="abs" style="left:0;top:239px;width:18px;height:4px;background:#b080c0"></div>
<div class="abs" style="left:0;top:243px;width:18px;height:1px;background:#f83cf0"></div>
<div class="abs" style="left:0;top:244px;width:18px;height:3px;background:#a858d8"></div>
<div class="abs" style="left:0;top:247px;width:18px;height:1px;background:#d8a8e8"></div>
<div class="abs" style="left:0;top:248px;width:18px;height:1px;background:#d8f8d8"></div>
<div class="abs" style="left:0;top:249px;width:18px;height:1px;background:#ffffff"></div>
<div class="abs" style="left:0;top:250px;width:18px;height:2px;background:#f0a0f0"></div>
<div class="abs" style="left:0;top:252px;width:18px;height:2px;background:#ffffff"></div>
<div class="abs" style="left:0;top:254px;width:18px;height:1px;background:#e89040"></div>
<div class="abs" style="left:0;top:255px;width:18px;height:3px;background:#a858d8"></div>
<div class="abs" style="left:0;top:258px;width:18px;height:3px;background:#f83cf0"></div>
<div class="abs" style="left:0;top:261px;width:18px;height:1px;background:#a858d8"></div>
<div class="abs" style="left:0;top:262px;width:18px;height:4px;background:#f0a0f0"></div>
<div class="abs" style="left:0;top:266px;width:18px;height:4px;background:#9a10f0"></div>
<div class="abs" style="left:0;top:270px;width:18px;height:1px;background:#d04a6a"></div>
<div class="abs" style="left:0;top:271px;width:18px;height:1px;background:#d8a8e8"></div>
<div class="abs" style="left:0;top:272px;width:18px;height:3px;background:#a858d8"></div>
<div class="abs" style="left:0;top:275px;width:18px;height:1px;background:#e89040"></div>
<div class="abs" style="left:0;top:276px;width:18px;height:2px;background:#d8a8e8"></div>
<div class="abs" style="left:0;top:278px;width:18px;height:3px;background:#a858d8"></div>
<div class="abs" style="left:0;top:281px;width:18px;height:1px;background:#f0a0f0"></div>
<div class="abs" style="left:0;top:282px;width:18px;height:1px;background:#a858d8"></div>
<div class="abs" style="left:0;top:283px;width:18px;height:3px;background:#d04a6a"></div>
<div class="abs" style="left:0;top:286px;width:18px;height:2px;background:#d8a8e8"></div>
<div class="abs" style="left:0;top:288px;width:18px;height:1px;background:#e89040"></div>
<div class="abs" style="left:0;top:289px;width:18px;height:2px;background:#a858d8"></div>
<div class="abs" style="left:0;top:291px;width:18px;height:5px;background:#f0a0f0"></div>
<div class="abs" style="left:0;top:296px;width:18px;height:1px;background:#b03890"></div>
<div class="abs" style="left:0;top:297px;width:18px;height:5px;background:#ffffff"></div>
<div class="abs" style="left:0;top:302px;width:18px;height:1px;background:#a858d8"></div>
<div class="abs" style="left:0;top:303px;width:18px;height:5px;background:#f83cf0"></div>
<div class="abs" style="left:0;top:308px;width:18px;height:1px;background:#a858d8"></div>
<div class="abs" style="left:0;top:309px;width:18px;height:4px;background:#ffffff"></div>
<div class="abs" style="left:0;top:313px;width:18px;height:1px;background:#f83cf0"></div>
<div class="abs" style="left:0;top:314px;width:18px;height:2px;background:#5a7ad0"></div>
<div class="abs" style="left:0;top:316px;width:18px;height:3px;background:#ffffff"></div>
<div class="abs" style="left:0;top:319px;width:18px;height:1px;background:#70d080"></div>
<div class="abs" style="left:0;top:320px;width:18px;height:1px;background:#d8f8d8"></div>
<div class="abs" style="left:0;top:321px;width:18px;height:1px;background:#a858d8"></div>
<div class="abs" style="left:0;top:322px;width:18px;height:3px;background:#d8f8d8"></div>
<div class="abs" style="left:0;top:325px;width:18px;height:1px;background:#a858d8"></div>
<div class="abs" style="left:0;top:326px;width:18px;height:1px;background:#ffffff"></div>
<div class="abs" style="left:0;top:327px;width:18px;height:6px;background:#9a10f0"></div>
<div class="abs" style="left:0;top:333px;width:18px;height:1px;background:#d04a6a"></div>
<div class="abs" style="left:0;top:334px;width:18px;height:3px;background:#a858d8"></div>
<div class="abs" style="left:0;top:337px;width:18px;height:1px;background:#e89040"></div>
<div class="abs" style="left:0;top:338px;width:18px;height:3px;background:#a858d8"></div>
<div class="abs" style="left:0;top:341px;width:18px;height:1px;background:#ffffff"></div>
<div class="abs" style="left:0;top:342px;width:18px;height:2px;background:#a858d8"></div>
<div class="abs" style="left:0;top:344px;width:18px;height:1px;background:#e89040"></div>
<div class="abs" style="left:0;top:345px;width:18px;height:2px;background:#a858d8"></div>
<div class="abs" style="left:0;top:347px;width:18px;height:2px;background:#f0a0f0"></div>
<div class="abs" style="left:0;top:349px;width:18px;height:2px;background:#a858d8"></div>
<div class="abs" style="left:0;top:351px;width:18px;height:1px;background:#e89040"></div>
<div class="abs" style="left:0;top:352px;width:18px;height:3px;background:#a858d8"></div>
<div class="abs" style="left:0;top:355px;width:18px;height:1px;background:#d04a6a"></div>
<div class="abs" style="left:0;top:356px;width:18px;height:6px;background:#9a10f0"></div>
<div class="abs" style="left:0;top:362px;width:18px;height:1px;background:#d04a6a"></div>
<div class="abs" style="left:0;top:363px;width:18px;height:1px;background:#ffffff"></div>
<div class="abs" style="left:0;top:364px;width:18px;height:2px;background:#a858d8"></div>
<div class="abs" style="left:0;top:366px;width:18px;height:3px;background:#e89040"></div>
<div class="abs" style="left:0;top:369px;width:18px;height:1px;background:#a858d8"></div>
<div class="abs" style="left:0;top:370px;width:18px;height:1px;background:#ffffff"></div>
<div class="abs" style="left:0;top:371px;width:18px;height:3px;background:#a858d8"></div>
<div class="abs" style="left:0;top:374px;width:18px;height:2px;background:#e89040"></div>
<div class="abs" style="left:0;top:376px;width:18px;height:3px;background:#f0a0f0"></div>
<div class="abs" style="left:0;top:379px;width:18px;height:2px;background:#b03890"></div>
<div class="abs" style="left:0;top:381px;width:18px;height:1px;background:#ffffff"></div>
<div class="abs" style="left:0;top:382px;width:18px;height:2px;background:#d8a8e8"></div>
<div class="abs" style="left:0;top:384px;width:18px;height:1px;background:#9a10f0"></div>
<div class="abs" style="left:0;top:385px;width:18px;height:3px;background:#ffffff"></div>
<div class="abs" style="left:0;top:388px;width:18px;height:2px;background:#9a10f0"></div>
<div class="abs" style="left:0;top:390px;width:18px;height:3px;background:#a858d8"></div>
<div class="abs" style="left:0;top:393px;width:18px;height:2px;background:#e89040"></div>
<div class="abs" style="left:0;top:395px;width:18px;height:1px;background:#f0a0f0"></div>
<div class="abs" style="left:0;top:396px;width:18px;height:3px;background:#f0a0f0"></div>
<div class="abs" style="left:0;top:399px;width:18px;height:1px;background:#5a7ad0"></div>
<div class="abs" style="left:0;top:400px;width:18px;height:2px;background:#f0a0f0"></div>
<div class="abs" style="left:0;top:402px;width:18px;height:1px;background:#d04a6a"></div>
<div class="abs" style="left:0;top:403px;width:18px;height:3px;background:#f0a0f0"></div>
<div class="abs" style="left:0;top:406px;width:18px;height:2px;background:#d8a8e8"></div>
<div class="abs" style="left:0;top:408px;width:18px;height:5px;background:#9a10f0"></div>
<div class="abs" style="left:0;top:0;width:18px;height:413px;background:rgba(190,130,210,0.22)"></div>
</div>
<div class="abs" style="left:1012px;top:48px;width:9px;height:422px;background:#fafafa;border-left:1px solid #ececec;box-sizing:border-box"></div>
<div class="abs" style="left:1015px;top:70.4px;width:4.7px;height:10.3px;border-radius:2.4px;background:#7a7a7a"></div>
<div class="abs" style="left:1021px;top:37px;width:1px;height:433px;background:#d6d6d6"></div>
<!-- splitter -->
<div class="abs" style="left:0;top:470px;width:1022px;height:5.5px;background:#e6e6e6;border-top:1px solid #d9d9d9;box-sizing:border-box"></div>
<!-- details -->
<div id="det">
<div class="dr" style="top:0.80px;background:#ebebeb"><span>Frame 3447: 66 bytes on wire (528 bits), 66 bytes captured (528 bits) on interface en0, id 0</span></div><svg class="abs" style="left:4px;top:2.60px" width="6" height="6"><path d="M1.6 0.6 L4 3 L1.6 5.4" fill="none" stroke="#9a9a9a" stroke-width="0.7"/></svg>
<div class="dr" style="top:11.15px;background:#ebebeb"><span>Radiotap Header v0, Length 36</span></div><svg class="abs" style="left:4px;top:12.95px" width="6" height="6"><path d="M1.6 0.6 L4 3 L1.6 5.4" fill="none" stroke="#9a9a9a" stroke-width="0.7"/></svg>
<div class="dr" style="top:21.50px;background:#ebebeb"><span>802.11 radio information</span></div><svg class="abs" style="left:4px;top:23.30px" width="6" height="6"><path d="M1.6 0.6 L4 3 L1.6 5.4" fill="none" stroke="#9a9a9a" stroke-width="0.7"/></svg>
<div class="dr" style="top:31.85px;background:#80fcfc"><span>IEEE 802.11 Deauthentication, Flags: ....R...C</span></div><svg class="abs" style="left:4px;top:33.65px" width="6" height="6"><path d="M1.6 0.6 L4 3 L1.6 5.4" fill="none" stroke="#9a9a9a" stroke-width="0.7"/></svg>
<div class="dr" style="top:42.20px;background:#ebebeb"><span>IEEE 802.11 Wireless Management</span></div><svg class="abs" style="left:4px;top:44.00px" width="6" height="6"><path d="M1.6 0.6 L4 3 L1.6 5.4" fill="none" stroke="#9a9a9a" stroke-width="0.7"/></svg>
</div>
<div class="abs" style="left:1008px;top:475.5px;width:4.3px;height:60.5px;background:#ececec"></div>
<div class="abs" style="left:1012.3px;top:475.5px;width:9.7px;height:60.5px;background:#fff;border-left:1px solid #d0d0d0;border-top:1px solid #d0d0d0;box-sizing:border-box"></div>
<div class="abs" style="left:1017.4px;top:476.2px;font-family:'Liberation Mono',monospace;font-size:7.7px;color:#8a8a8a;line-height:8.86px;white-space:pre;-webkit-text-stroke:0.1px #8a8a8a">0
0
0
0
0</div>
</body></html>
